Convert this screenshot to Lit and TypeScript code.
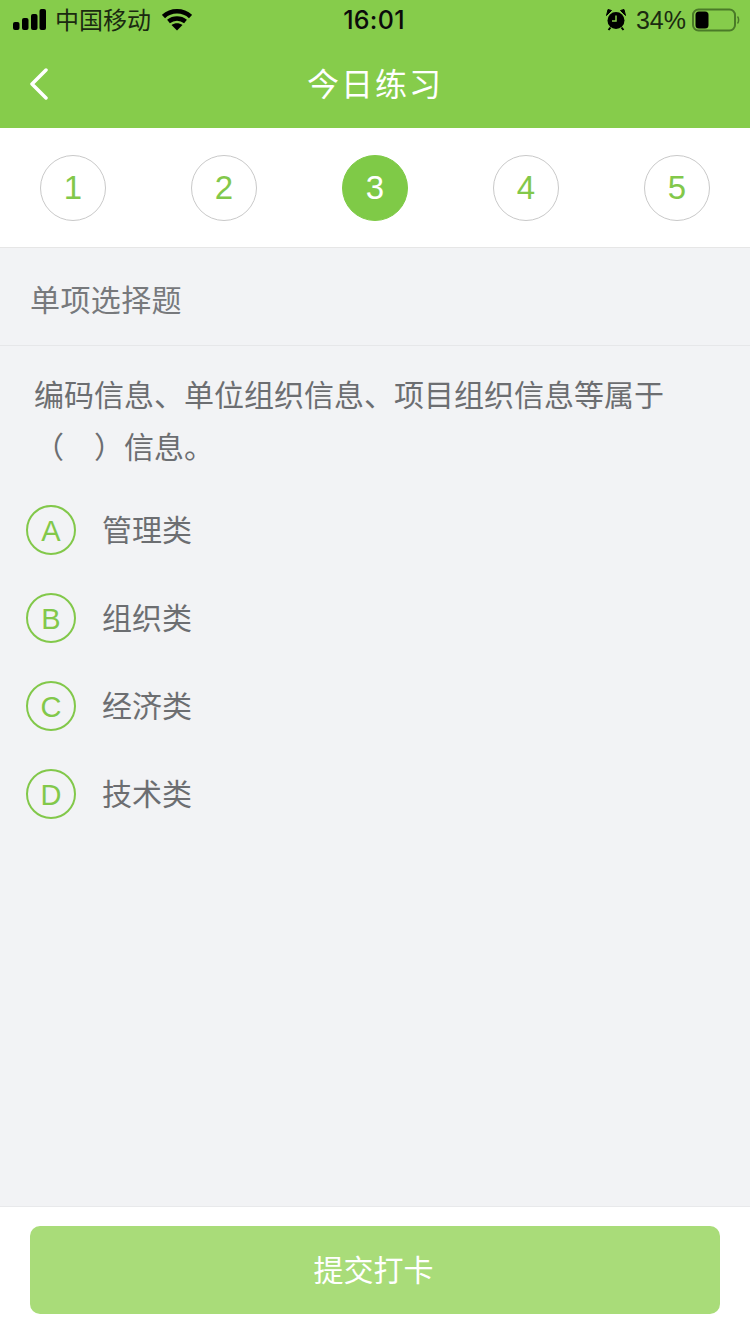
import { LitElement, html, css } from "lit";
import { customElement } from "lit/decorators.js";
import { classMap } from "lit/directives/class-map.js";

const STEPS = [1, 2, 3, 4, 5];
const OPTIONS = [
  { key: "A", label: "管理类" },
  { key: "B", label: "组织类" },
  { key: "C", label: "经济类" },
  { key: "D", label: "技术类" },
];

@customElement("app-root")
export class AppRoot extends LitElement {
  static styles = css`
    :host {
      display: flex;
      flex-direction: column;
      width: 750px;
      height: 1334px;
      background: #f2f3f5;
      font-family: "Liberation Sans", "Noto Sans CJK SC", sans-serif;
      overflow: hidden;
    }

    .header {
      height: 128px;
      background: #86cc4b;
      display: flex;
      flex-direction: column;
    }

    .status {
      height: 40px;
      display: flex;
      align-items: center;
      justify-content: space-between;
      padding: 0 10px 0 13px;
      color: #111;
      position: relative;
    }

    .status-left,
    .status-right {
      display: flex;
      align-items: center;
    }

    .carrier {
      font-size: 24px;
      line-height: 36px;
      margin: 1px 11px 0 9px;
      color: #1a2a10;
    }

    .time {
      position: absolute;
      left: 0;
      right: 2px;
      text-align: center;
      font-size: 25px;
      font-weight: 500;
      letter-spacing: 0.3px;
      font-family: Inter, "Liberation Sans", sans-serif;
      color: #0b0b0b;
    }

    .battery-pct {
      font-size: 25px;
      margin: 0 6px 0 9px;
      color: #1a2a10;
    }

    .nav {
      flex: 1;
      display: flex;
      align-items: center;
      justify-content: center;
      position: relative;
      padding-bottom: 4px;
    }

    .back {
      position: absolute;
      left: 29px;
      top: 28px;
    }

    .title {
      color: #fff;
      font-size: 32px;
      letter-spacing: 2px;
    }

    .steps {
      height: 120px;
      box-sizing: border-box;
      background: #fff;
      border-bottom: 1px solid #e6e6e6;
      display: flex;
      justify-content: space-between;
      align-items: flex-start;
      padding: 27px 40px 0;
    }

    .step {
      width: 66px;
      height: 66px;
      box-sizing: border-box;
      border-radius: 50%;
      border: 1px solid #c9c9c9;
      color: #82c84a;
      font-size: 33px;
      display: flex;
      align-items: center;
      justify-content: center;
    }

    .step.active {
      background: #7fca47;
      border-color: #7fca47;
      color: #fff;
    }

    .kind {
      height: 98px;
      box-sizing: border-box;
      border-bottom: 1px solid #e6e7e9;
      display: flex;
      align-items: center;
      padding: 3px 30px 0;
      font-size: 30px;
      letter-spacing: 0.4px;
      color: #77797c;
    }

    .question {
      margin: 0;
      padding: 24px 34px 0;
      font-size: 30px;
      line-height: 52px;
      color: #6c6e71;
    }

    .blank {
      display: block;
      white-space: pre;
    }

    .options {
      flex: 1;
      display: flex;
      flex-direction: column;
      gap: 38px;
      padding: 31px 26px 0;
    }

    .option {
      display: flex;
      align-items: center;
      gap: 26px;
      height: 50px;
    }

    .badge {
      width: 50px;
      height: 50px;
      box-sizing: border-box;
      border: 2px solid #82c84a;
      border-radius: 50%;
      color: #82c84a;
      font-size: 29px;
      padding-top: 2px;
      display: flex;
      align-items: center;
      justify-content: center;
    }

    .label {
      font-size: 30px;
      margin-top: -5px;
      color: #6c6e71;
    }

    .footer {
      height: 128px;
      box-sizing: border-box;
      background: #fff;
      border-top: 1px solid #e8e9eb;
      padding: 19px 30px 0;
    }

    .submit {
      width: 690px;
      height: 88px;
      border: 0;
      border-radius: 10px;
      background: #a9dc79;
      color: #fff;
      font: inherit;
      font-size: 30px;
      padding: 0 3px 4px 0;
    }
  `;

  render() {
    return html`
      <div class="header">
        <div class="status">
          <div class="status-left">
            <svg width="33" height="22" viewBox="0 0 33 22">
              <rect x="0" y="13" width="6.5" height="8" rx="2" fill="#000" />
              <rect x="9" y="9" width="6.5" height="12" rx="2" fill="#000" />
              <rect x="18" y="5" width="6.5" height="16" rx="2" fill="#000" />
              <rect x="26.5" y="0" width="6.5" height="21" rx="2" fill="#000" />
            </svg>
            <span class="carrier">中国移动</span>
            <svg width="30" height="22" viewBox="0 0 30 22">
              <path d="M1.5 7.5 C9 0.5 21 0.5 28.5 7.5" fill="none" stroke="#000" stroke-width="4.5" />
              <path d="M6.5 12.5 C11.5 8.5 18.5 8.5 23.5 12.5" fill="none" stroke="#000" stroke-width="4.5" />
              <path d="M9.5 16 C13 13.5 17 13.5 20.5 16 L15 21.5 Z" fill="#000" />
            </svg>
          </div>
          <div class="time">16:01</div>
          <div class="status-right">
            <svg width="22" height="22" viewBox="0 0 22 22">
              <circle cx="11" cy="11.5" r="8.5" fill="#000" />
              <path d="M11 6.5 V12 H7" fill="none" stroke="#86cc4b" stroke-width="1.5" />
              <path d="M1.5 6.5 L6.5 1.5 L3 0.5 Z M20.5 6.5 L15.5 1.5 L19 0.5 Z" fill="#000" stroke="#000" />
              <path d="M5.5 18.5 L3.5 21 M16.5 18.5 L18.5 21" stroke="#000" stroke-width="2" />
            </svg>
            <span class="battery-pct">34%</span>
            <svg width="48" height="24" viewBox="0 0 48 24">
              <rect x="1" y="1.5" width="42" height="21" rx="5.5" fill="none" stroke="#4a7a28" stroke-width="2" />
              <rect x="3.5" y="3.5" width="13" height="17" rx="3.5" fill="#000" />
              <path d="M45.5 8.5 C47 10 47 14 45.5 15.5" fill="none" stroke="#4a7a28" stroke-width="1.5" />
            </svg>
          </div>
        </div>
        <div class="nav">
          <svg class="back" width="20" height="32" viewBox="0 0 20 32">
            <path d="M17 2 L3 16 L17 30" fill="none" stroke="#fff" stroke-width="3.5" stroke-linecap="round" stroke-linejoin="round" />
          </svg>
          <div class="title">今日练习</div>
        </div>
      </div>
      <div class="steps">
        ${STEPS.map(
          (n) => html`<div class=${classMap({ step: true, active: n === 3 })}>${n}</div>`
        )}
      </div>
      <div class="kind">单项选择题</div>
      <p class="question">
        编码信息、单位组织信息、项目组织信息等属于
        <span class="blank">（　）信息。</span>
      </p>
      <div class="options">
        ${OPTIONS.map(
          (o) => html`<div class="option">
            <div class="badge">${o.key}</div>
            <div class="label">${o.label}</div>
          </div>`
        )}
      </div>
      <div class="footer">
        <button class="submit">提交打卡</button>
      </div>
    `;
  }
}
